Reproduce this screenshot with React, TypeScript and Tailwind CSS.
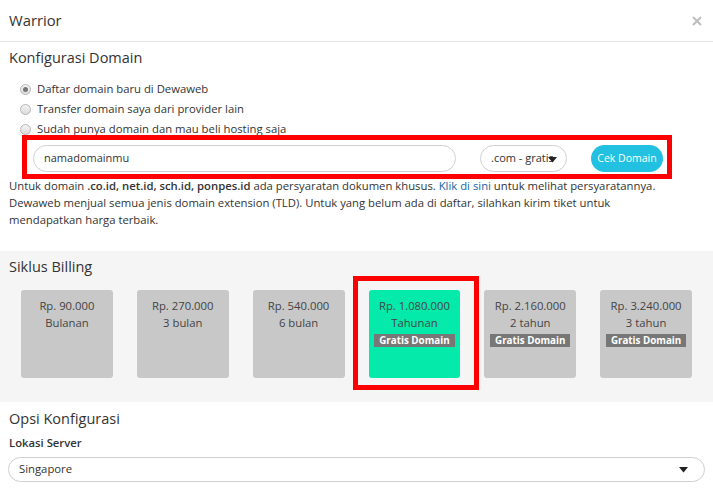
import React from "react";

const cycles = [
  { price: "Rp. 90.000", period: "Bulanan", badge: false, selected: false },
  { price: "Rp. 270.000", period: "3 bulan", badge: false, selected: false },
  { price: "Rp. 540.000", period: "6 bulan", badge: false, selected: false },
  { price: "Rp. 1.080.000", period: "Tahunan", badge: true, selected: true },
  { price: "Rp. 2.160.000", period: "2 tahun", badge: true, selected: false },
  { price: "Rp. 3.240.000", period: "3 tahun", badge: true, selected: false },
];

function Radio({ checked, label }: { checked?: boolean; label: string }) {
  return (
    <div className="flex h-[20px] items-center">
      <span className="ml-[11px] flex h-[11px] w-[11px] items-center justify-center rounded-full border border-[#b5b5b5] bg-gradient-to-b from-[#f4f4f4] to-[#dcdcdc]">
        {checked && <span className="h-[5px] w-[5px] rounded-full bg-[#777]" />}
      </span>
      <span className="ml-[6px] text-[11.3px] text-[#333]">{label}</span>
    </div>
  );
}

export default function App() {
  return (
    <div
      className="w-[713px] h-[497px] overflow-hidden bg-white text-[#333]"
      style={{ fontFamily: '"Open Sans", "Noto Sans", sans-serif' }}
    >
      {/* header */}
      <div className="flex h-[42px] items-center justify-between border-b border-[#e5e5e5] pl-[9px] pr-[11px]">
        <span className="text-[14.8px] text-[#333]">Warrior</span>
        <svg width="10" height="10" viewBox="0 0 10 10" className="mt-[1px]">
          <path d="M1 1 L9 9 M9 1 L1 9" stroke="#bdbdbd" strokeWidth="2" />
        </svg>
      </div>

      {/* domain section */}
      <div className="px-[9px] pt-[5px] pb-[23px]">
        <div className="text-[14.5px] leading-[22px] text-[#333]">Konfigurasi Domain</div>
        <div className="mt-[10px]">
          <Radio checked label="Daftar domain baru di Dewaweb" />
          <Radio label="Transfer domain saya dari provider lain" />
          <Radio label="Sudah punya domain dan mau beli hosting saja" />
        </div>
        <div className="relative mt-[6px] flex items-center pl-[24px]">
          <div className="flex h-[27px] w-[423px] items-center rounded-full border border-[#cfcfcf] bg-white pl-[10px] text-[11px] text-[#333]">
            namadomainmu
          </div>
          <div className="relative ml-[24px] flex h-[27px] w-[87px] items-center overflow-hidden rounded-full border border-[#cfcfcf] bg-white pl-[10px] text-[11px] text-[#333] whitespace-nowrap">
            .com - gratis
            <svg width="9" height="6" viewBox="0 0 9 6" className="absolute right-[9px] top-[11px]">
              <path d="M0 0 H9 L4.5 5.5 Z" fill="#222" />
            </svg>
          </div>
          <div className="ml-[24px] flex h-[27px] w-[72px] items-center justify-center rounded-full bg-[#22c1e1] text-[10.5px] text-white whitespace-nowrap">
            Cek Domain
          </div>
          <div className="pointer-events-none absolute left-[13px] -top-[10px] h-[44px] w-[650px] border-[5px] border-[#ff0000]" />
        </div>
        <div className="mt-[5px] text-[11.3px] leading-[17px] text-[#333]">
          Untuk domain <b className="font-semibold">.co.id, net.id, sch.id, ponpes.id</b> ada persyaratan dokumen khusus.{" "}
          <span className="text-[#1566a6]">Klik di sini</span> untuk melihat persyaratannya.
          <br />
          Dewaweb menjual semua jenis domain extension (TLD). Untuk yang belum ada di daftar, silahkan kirim tiket untuk
          <br />
          mendapatkan harga terbaik.
        </div>
      </div>

      {/* billing */}
      <div className="bg-[#f5f5f5] px-[9px] pt-[5px] pb-[24px]">
        <div className="text-[14.5px] leading-[22px] text-[#333]">Siklus Billing</div>
        <div className="mt-[12px] grid grid-cols-6">
          {cycles.map((c) => (
            <div key={c.price} className="relative px-[12px]">
              <div
                className={`flex h-[88px] flex-col items-center rounded-[3px] pt-[7px] text-[11.3px] leading-[17px] text-[#444] ${
                  c.selected ? "bg-[#03eaab]" : "bg-[#c8c8c8]"
                }`}
              >
                <span>{c.price}</span>
                <span>{c.period}</span>
                {c.badge && (
                  <span className="mt-[3px] flex h-[13px] items-center bg-[#777] px-[5px] text-[9.8px] font-bold leading-[13px] text-white">
                    Gratis Domain
                  </span>
                )}
              </div>
              {c.selected && (
                <div className="pointer-events-none absolute -left-[4px] -top-[14px] h-[114px] w-[126px] border-[5px] border-[#ff0000]" />
              )}
            </div>
          ))}
        </div>
      </div>

      {/* options */}
      <div className="px-[8px] pt-[6px]">
        <div className="pl-[1px] text-[14.5px] leading-[22px] text-[#333]">Opsi Konfigurasi</div>
        <div className="mt-[3px] pl-[1px] text-[11.3px] font-semibold leading-[20px] text-[#333]">Lokasi Server</div>
        <div className="relative mt-[4px] flex h-[25px] items-center rounded-full border border-[#cfcfcf] bg-white pl-[10px] text-[11.3px] text-[#333]">
          Singapore
          <svg width="9" height="6" viewBox="0 0 9 6" className="absolute right-[16px] top-[9px]">
            <path d="M0 0 H9 L4.5 5.5 Z" fill="#222" />
          </svg>
        </div>
      </div>
    </div>
  );
}
